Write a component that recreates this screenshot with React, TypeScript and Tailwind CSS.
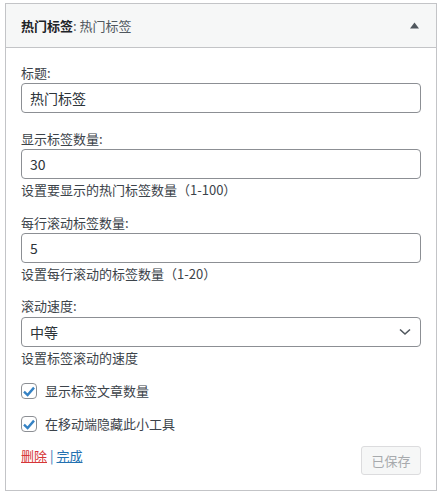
import React from "react";

const font = { fontFamily: '"Segoe UI", "Noto Sans CJK SC", "Noto Sans", sans-serif' };

function Field({ label, value, help }: { label: string; value: string; help?: string }) {
  return (
    <div>
      <label className="block text-[13px] leading-[18px] text-[#3c434a]">{label}</label>
      <input
        readOnly
        value={value}
        className="mt-px block h-[30px] w-full rounded-[4px] border border-[#8c8f94] bg-white px-2 text-[14px] text-[#2c3338] outline-none"
        style={font}
      />
      {help && <p className="mt-[2px] text-[13px] leading-[18px] text-[#3c434a]">{help}</p>}
    </div>
  );
}

function Check({ label }: { label: string }) {
  return (
    <div className="flex items-center">
      <span className="flex h-4 w-4 items-center justify-center rounded-[4px] border border-[#8c8f94] bg-white">
        <svg width="12" height="11" viewBox="0 0 12 11">
          <path d="M1 5.6 L4.6 9 L11 1.6" fill="none" stroke="#3582c4" strokeWidth="2.4" strokeLinejoin="miter" />
        </svg>
      </span>
      <span className="ml-2 text-[13px] leading-[18px] text-[#3c434a]">{label}</span>
    </div>
  );
}

export default function App() {
  return (
    <div className="bg-white pl-[5px] pt-[3px]" style={font}>
      <div className="w-[432px] border border-[#c3c4c7] bg-white">
        {/* header */}
        <div className="flex h-[44px] items-center justify-between border-b border-[#c3c4c7] bg-[#f6f7f7] pl-[15px] pr-[17px]">
          <h3 className="text-[13px] font-semibold text-[#1d2327]">
            热门标签<span className="font-normal text-[#50575e]">: 热门标签</span>
          </h3>
          <svg width="9" height="7" viewBox="0 0 9 7">
            <path d="M4.5 0.5 L9 6.5 L0 6.5 Z" fill="#50575e" />
          </svg>
        </div>

        {/* body */}
        <div className="px-[15px] pb-[15px] pt-[16px]">
          <Field label="标题:" value="热门标签" />
          <div className="mt-[17px]">
            <Field label="显示标签数量:" value="30" help="设置要显示的热门标签数量（1-100）" />
          </div>
          <div className="mt-[15px]">
            <Field label="每行滚动标签数量:" value="5" help="设置每行滚动的标签数量（1-20）" />
          </div>
          <div className="mt-[14px]">
            <label className="block text-[13px] leading-[18px] text-[#3c434a]">滚动速度:</label>
            <div className="relative mt-[2px] flex h-[30px] w-full items-center rounded-[4px] border border-[#8c8f94] bg-white pl-2 text-[14px] text-[#2c3338]">
              中等
              <svg className="absolute right-[9px] top-[10px]" width="12" height="8" viewBox="0 0 12 8">
                <path d="M1 1.5 L6 6 L11 1.5" fill="none" stroke="#50575e" strokeWidth="1.6" />
              </svg>
            </div>
            <p className="mt-[2px] text-[13px] leading-[18px] text-[#3c434a]">设置标签滚动的速度</p>
          </div>

          <div className="mt-[15px]">
            <Check label="显示标签文章数量" />
          </div>
          <div className="mt-[15px]">
            <Check label="在移动端隐藏此小工具" />
          </div>

          <div className="mt-[13px] flex items-center justify-between">
            <div className="-mt-[10px] text-[13px] leading-[18px] text-[#3c434a]">
              <a className="text-[#d63638] underline">删除</a>
              <span className="mx-[3px] text-[#2271b1]">|</span>
              <a className="text-[#2271b1] underline">完成</a>
            </div>
            <button className="h-[29px] w-[60px] rounded-[3px] border border-[#dcdcde] bg-[#f6f7f7] text-[13px] text-[#a7aaad]">
              已保存
            </button>
          </div>
        </div>
      </div>
    </div>
  );
}
